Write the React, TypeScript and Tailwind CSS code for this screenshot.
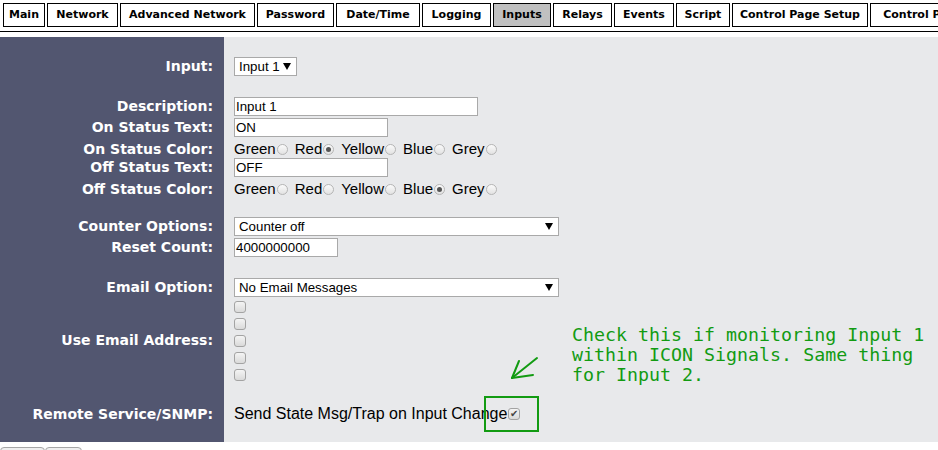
import React from "react";

const TABS = [
  { label: "Main", w: "w-[42px]" },
  { label: "Network", w: "w-[71px]" },
  { label: "Advanced Network", w: "w-[135px]" },
  { label: "Password", w: "w-[77px]" },
  { label: "Date/Time", w: "w-[84px]" },
  { label: "Logging", w: "w-[69px]" },
  { label: "Inputs", w: "w-[58px]", active: true },
  { label: "Relays", w: "w-[59px]" },
  { label: "Events", w: "w-[60px]" },
  { label: "Script", w: "w-[54px]" },
  { label: "Control Page Setup", w: "w-[136px]" },
  { label: "Control Panel", w: "w-[110px]" },
];

function Row({ label, h, children }: { label?: string; h: string; children?: React.ReactNode }) {
  return (
    <div className={`grid grid-cols-[224px_1fr] ${h}`}>
      <div className="flex items-center justify-end bg-[#525670] pr-[11px] font-['DejaVu_Sans',Verdana,sans-serif] text-[14px] font-bold text-white">
        {label}
      </div>
      <div className="flex items-center bg-[#e8e9eb] pl-[10px]">{children}</div>
    </div>
  );
}

function TextBox({ value, w }: { value: string; w: string }) {
  return (
    <div className={`flex h-[19px] items-center border border-[#a9a9a9] bg-white pl-[1px] text-[13.3px] text-black ${w}`}>
      {value}
    </div>
  );
}

function Select({ value, w }: { value: string; w: string }) {
  return (
    <div className={`flex h-[19px] items-center justify-between border border-[#a9a9a9] bg-white pl-[4px] pr-[5px] text-[13.3px] text-black ${w}`}>
      <span>{value}</span>
      <svg width="8" height="7" viewBox="0 0 8 7">
        <polygon points="0,0 8,0 4,7" fill="#000" />
      </svg>
    </div>
  );
}

function Radio({ checked }: { checked?: boolean }) {
  return (
    <span className="ml-[1px] flex h-[11px] w-[11px] items-center justify-center rounded-full border border-[#b5b5b5] bg-gradient-to-b from-[#fbfbfb] to-[#e2e2e2]">
      {checked && <span className="h-[5px] w-[5px] rounded-full bg-[#555]" />}
    </span>
  );
}

function ColorChoice({ selected }: { selected: string }) {
  const names = ["Green", "Red", "Yellow", "Blue", "Grey"];
  return (
    <div className="flex items-center text-[15px] text-black">
      {names.map((n, i) => (
        <div key={n} className={`flex items-center ${i > 0 ? "ml-[7px]" : ""}`}>
          <span>{n}</span>
          <Radio checked={n === selected} />
        </div>
      ))}
    </div>
  );
}

function Checkbox({ checked }: { checked?: boolean }) {
  return (
    <span className="flex h-[12px] w-[12px] items-center justify-center rounded-[3px] border border-[#a3a3a3] bg-gradient-to-b from-[#f4f4f4] to-[#dadada] text-[10px] leading-none text-[#444]">
      {checked && "✔"}
    </span>
  );
}

export default function App() {
  return (
    <div className="h-[450px] w-[938px] overflow-hidden bg-white font-['Liberation_Sans',Arial,sans-serif]">
      <div className="flex gap-[2px] overflow-hidden pl-[3px] pt-[3px]">
        {TABS.map((t) => (
          <div
            key={t.label}
            className={`flex h-[24px] shrink-0 items-center justify-center whitespace-nowrap border border-black font-['DejaVu_Sans',Verdana,sans-serif] text-[11px] font-bold text-black ${t.w} ${
              t.active ? "bg-[#c0c0c0]" : "bg-white"
            }`}
          >
            {t.label}
          </div>
        ))}
      </div>
      <div className="mt-[4px] h-[1px] bg-black" />

      <div className="relative mt-[5px]">
        <Row h="h-[19px]" />
        <Row label="Input:" h="h-[21px]">
          <Select value="Input 1" w="w-[63px]" />
        </Row>
        <Row h="h-[19px]" />
        <Row label="Description:" h="h-[21px]">
          <TextBox value="Input 1" w="w-[244px]" />
        </Row>
        <Row label="On Status Text:" h="h-[21px]">
          <TextBox value="ON" w="w-[154px]" />
        </Row>
        <Row label="On Status Color:" h="h-[19px]">
          <ColorChoice selected="Red" />
        </Row>
        <Row label="Off Status Text:" h="h-[21px]">
          <TextBox value="OFF" w="w-[154px]" />
        </Row>
        <Row label="Off Status Color:" h="h-[19px]">
          <ColorChoice selected="Blue" />
        </Row>
        <Row h="h-[19px]" />
        <Row label="Counter Options:" h="h-[21px]">
          <Select value="Counter off" w="w-[325px]" />
        </Row>
        <Row label="Reset Count:" h="h-[21px]">
          <TextBox value="4000000000" w="w-[104px]" />
        </Row>
        <Row h="h-[19px]" />
        <Row label="Email Option:" h="h-[21px]">
          <Select value="No Email Messages" w="w-[325px]" />
        </Row>
        <Row label="Use Email Address:" h="h-[85px]">
          <div className="flex flex-col">
            {[0, 1, 2, 3, 4].map((i) => (
              <div key={i} className="flex h-[17px] items-center">
                <Checkbox />
              </div>
            ))}
          </div>
        </Row>
        <Row h="h-[19px]" />
        <Row label="Remote Service/SNMP:" h="h-[21px]">
          <span className="text-[16px] text-black">Send State Msg/Trap on Input Change</span>
          <span className="ml-[1px]">
            <Checkbox checked />
          </span>
        </Row>
        <Row h="h-[19px]" />

        {/* annotation */}
        <div className="absolute left-[572px] top-[288px] font-['DejaVu_Sans_Mono',monospace] text-[18.3px] leading-[20px] text-[#129b12]">
          <div>Check this if monitoring Input 1</div>
          <div>within ICON Signals. Same thing</div>
          <div>for Input 2.</div>
        </div>
        <svg className="absolute left-[500px] top-[313px]" width="50" height="40" viewBox="500 350 50 40">
          <g stroke="#129b12" strokeWidth="2" fill="none" strokeLinecap="round">
            <line x1="537" y1="358" x2="512" y2="378" />
            <line x1="512" y1="378" x2="519" y2="361" />
            <line x1="512" y1="378" x2="533" y2="375" />
          </g>
        </svg>
        <div className="absolute left-[484px] top-[359px] h-[36px] w-[55px] border-2 border-[#129b12]" />
      </div>

      <div className="mt-[5px] flex">
        <div className="h-[22px] w-[45px] rounded-sm border border-[#a6a6a6] bg-[#efefef]" />
        <div className="h-[22px] w-[37px] rounded-sm border border-[#a6a6a6] bg-[#efefef]" />
      </div>
    </div>
  );
}
